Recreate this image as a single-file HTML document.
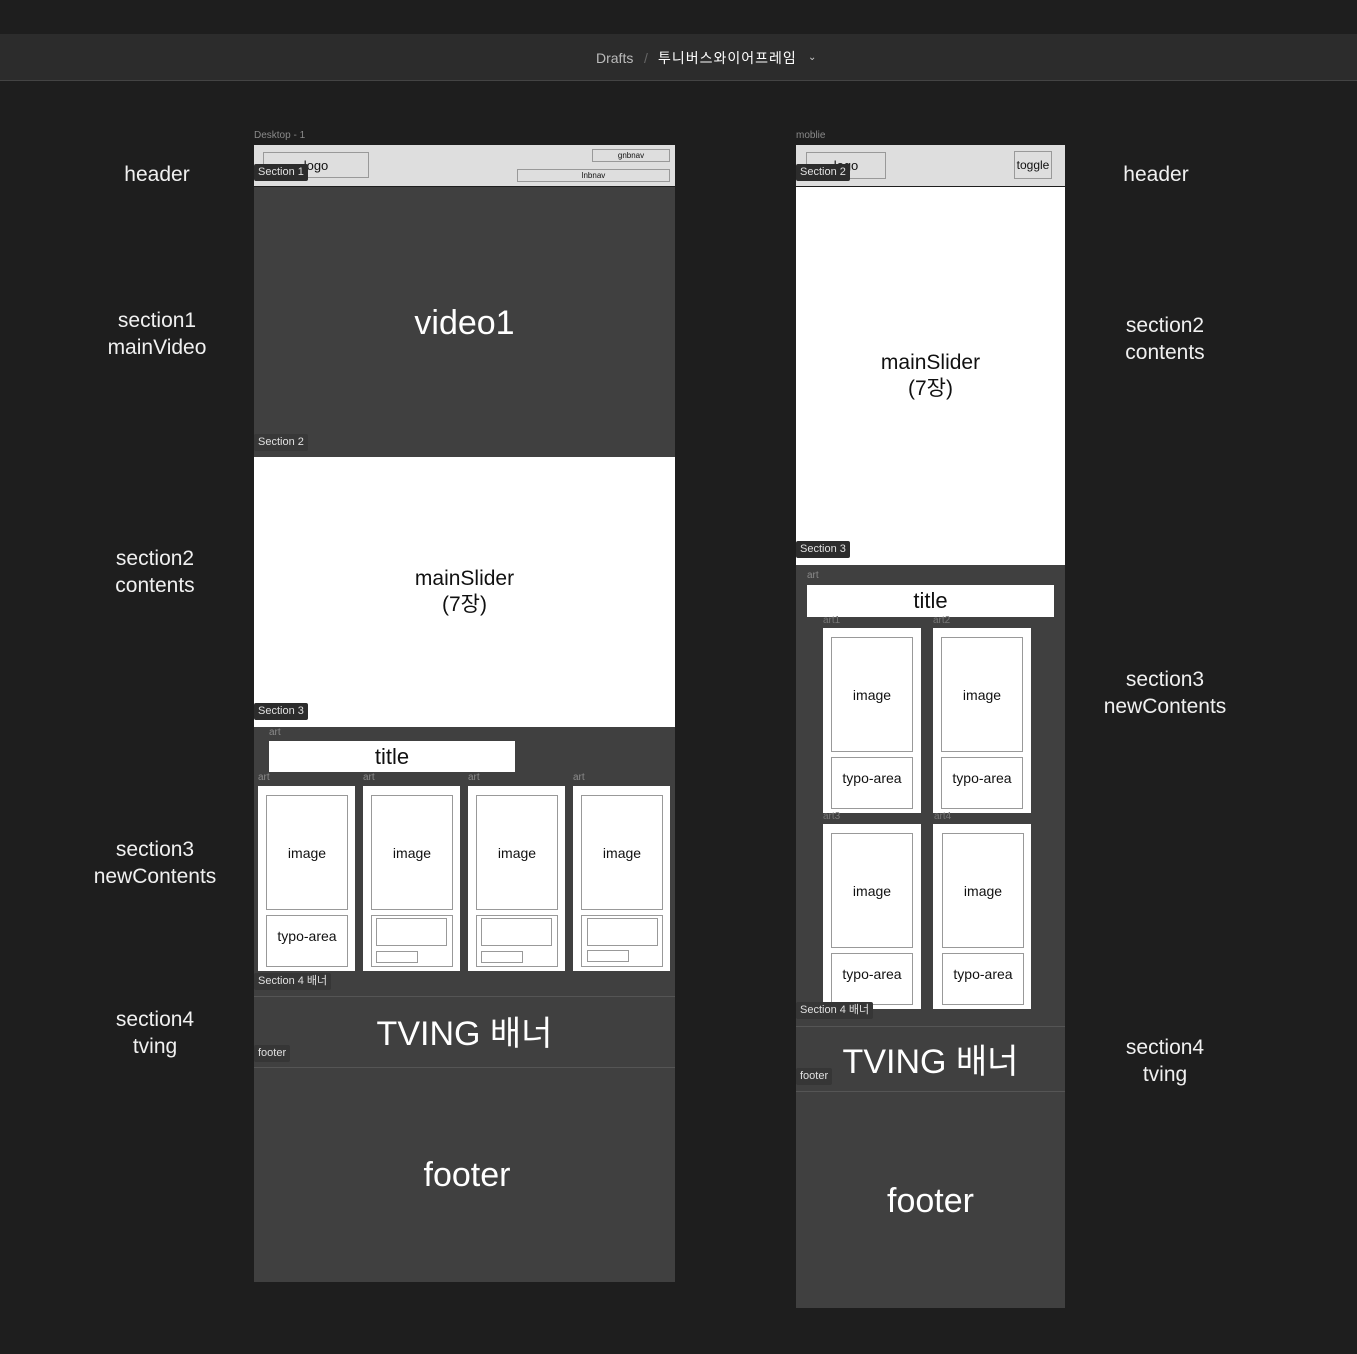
<!DOCTYPE html>
<html><head><meta charset="utf-8">
<style>
*{margin:0;padding:0;box-sizing:border-box}
body{width:1357px;height:1354px;background:#1e1e1e;position:relative;overflow:hidden;font-family:"Liberation Sans","Noto Sans CJK KR",sans-serif}
div{position:absolute}
.c{display:flex;align-items:center;justify-content:center;text-align:center}
.side{color:#f0f0f0;font-size:21px;line-height:27px;text-align:center;width:200px}
.tag{background:#2c2c2c;color:#e0e0e0;font-size:11px;line-height:17px;padding:0 4px;border-radius:2px;height:17px;white-space:nowrap}
.sm{color:#8a8a8a;font-size:10px;line-height:12px}
.dark{background:#404040}
.card{background:#fff}
.box{border:1px solid #999;background:#fff;color:#111;font-size:14px}
.ty{padding-bottom:10px}
.hl{height:1px;background:#555}
</style></head><body>
<div style="left:0;top:34px;width:1357px;height:47px;background:#2c2c2c;border-bottom:1px solid #444"></div>
<div style="left:596px;top:49px;font-size:14px;color:#bbb;line-height:18px">Drafts</div>
<div style="left:644px;top:49px;font-size:14px;color:#666;line-height:18px">/</div>
<div style="left:658px;top:49px;font-size:14px;color:#fff;line-height:18px;letter-spacing:1px">투니버스와이어프레임</div>
<div style="left:808px;top:49px;font-size:10px;color:#ccc;line-height:18px">⌄</div>

<div class="side" style="left:57px;top:161px">header</div>
<div class="side" style="left:57px;top:307px">section1<br>mainVideo</div>
<div class="side" style="left:55px;top:545px">section2<br>contents</div>
<div class="side" style="left:55px;top:836px">section3<br>newContents</div>
<div class="side" style="left:55px;top:1006px">section4<br>tving</div>
<div class="side" style="left:1056px;top:161px">header</div>
<div class="side" style="left:1065px;top:312px">section2<br>contents</div>
<div class="side" style="left:1065px;top:666px">section3<br>newContents</div>
<div class="side" style="left:1065px;top:1034px">section4<br>tving</div>

<div class="sm" style="left:254px;top:130px">Desktop - 1</div>
<div style="left:254px;top:145px;width:421px;height:41px;background:#dedede"></div>
<div class="box c" style="left:263px;top:152px;width:106px;height:26px;background:transparent;font-size:13px">logo</div>
<div class="box c" style="left:592px;top:149px;width:78px;height:13px;background:transparent;font-size:8px">gnbnav</div>
<div class="box c" style="left:517px;top:169px;width:153px;height:13px;background:transparent;font-size:8px">lnbnav</div>
<div class="tag" style="left:254px;top:164px">Section 1</div>
<div class="dark" style="left:254px;top:187px;width:421px;height:270px"></div>
<div class="c" style="left:254px;top:300px;width:421px;height:46px;color:#fff;font-size:34px">video1</div>
<div class="tag" style="left:254px;top:434px;background:#383838">Section 2</div>
<div class="c" style="left:254px;top:457px;width:421px;height:270px;background:#fff;color:#111;font-size:21px;line-height:26px">mainSlider<br>(7장)</div>
<div class="tag" style="left:254px;top:703px">Section 3</div>
<div class="dark" style="left:254px;top:727px;width:421px;height:270px"></div>
<div class="sm" style="left:269px;top:727px">art</div>
<div class="c" style="left:269px;top:741px;width:246px;height:31px;background:#fff;color:#111;font-size:22px">title</div>
<div class="sm" style="left:258px;top:772px">art</div>
<div class="sm" style="left:363px;top:772px">art</div>
<div class="sm" style="left:468px;top:772px">art</div>
<div class="sm" style="left:573px;top:772px">art</div>
<div class="card" style="left:258px;top:786px;width:97px;height:185px"></div>
<div class="card" style="left:363px;top:786px;width:97px;height:185px"></div>
<div class="card" style="left:468px;top:786px;width:97px;height:185px"></div>
<div class="card" style="left:573px;top:786px;width:97px;height:185px"></div>
<div class="box c" style="left:266px;top:795px;width:82px;height:115px">image</div>
<div class="box c" style="left:371px;top:795px;width:82px;height:115px">image</div>
<div class="box c" style="left:476px;top:795px;width:82px;height:115px">image</div>
<div class="box c" style="left:581px;top:795px;width:82px;height:115px">image</div>
<div class="box c ty" style="left:266px;top:915px;width:82px;height:52px">typo-area</div>
<div class="box" style="left:371px;top:915px;width:82px;height:52px"></div>
<div class="box" style="left:476px;top:915px;width:82px;height:52px"></div>
<div class="box" style="left:581px;top:915px;width:82px;height:52px"></div>
<div class="box" style="left:376px;top:918px;width:71px;height:28px"></div>
<div class="box" style="left:481px;top:918px;width:71px;height:28px"></div>
<div class="box" style="left:587px;top:918px;width:71px;height:28px"></div>
<div class="box" style="left:376px;top:951px;width:42px;height:12px"></div>
<div class="box" style="left:481px;top:951px;width:42px;height:12px"></div>
<div class="box" style="left:587px;top:950px;width:42px;height:12px"></div>
<div class="tag" style="left:254px;top:973px;background:#363636">Section 4 배너</div>
<div class="dark" style="left:254px;top:997px;width:421px;height:285px"></div>
<div class="hl" style="left:254px;top:996px;width:421px"></div>
<div class="hl" style="left:254px;top:1067px;width:421px"></div>
<div class="c" style="left:254px;top:1006px;width:421px;height:48px;color:#fff;font-size:34px">TVING 배너</div>
<div class="tag" style="left:254px;top:1045px;background:#363636">footer</div>
<div class="c" style="left:254px;top:1150px;width:426px;height:50px;color:#fff;font-size:34px">footer</div>

<div class="sm" style="left:796px;top:130px">moblie</div>
<div style="left:796px;top:145px;width:269px;height:41px;background:#dedede"></div>
<div class="box c" style="left:806px;top:152px;width:80px;height:27px;background:transparent;font-size:13px">logo</div>
<div class="box c" style="left:1014px;top:151px;width:38px;height:28px;background:transparent;font-size:12px">toggle</div>
<div class="tag" style="left:796px;top:164px">Section 2</div>
<div class="c" style="left:796px;top:187px;width:269px;height:378px;background:#fff;color:#111;font-size:21px;line-height:26px">mainSlider<br>(7장)</div>
<div class="tag" style="left:796px;top:541px">Section 3</div>
<div class="dark" style="left:796px;top:565px;width:269px;height:743px"></div>
<div class="sm" style="left:807px;top:570px">art</div>
<div class="c" style="left:807px;top:585px;width:247px;height:32px;background:#fff;color:#111;font-size:22px">title</div>
<div class="sm" style="left:823px;top:615px;color:#777">art1</div>
<div class="sm" style="left:933px;top:615px;color:#777">art2</div>
<div class="card" style="left:823px;top:628px;width:98px;height:185px"></div>
<div class="card" style="left:933px;top:628px;width:98px;height:185px"></div>
<div class="box c" style="left:831px;top:637px;width:82px;height:115px">image</div>
<div class="box c" style="left:941px;top:637px;width:82px;height:115px">image</div>
<div class="box c ty" style="left:831px;top:757px;width:82px;height:52px">typo-area</div>
<div class="box c ty" style="left:941px;top:757px;width:82px;height:52px">typo-area</div>
<div class="sm" style="left:823px;top:811px;color:#777">art3</div>
<div class="sm" style="left:934px;top:811px;color:#777">art4</div>
<div class="card" style="left:823px;top:824px;width:98px;height:185px"></div>
<div class="card" style="left:933px;top:824px;width:98px;height:185px"></div>
<div class="box c" style="left:831px;top:833px;width:82px;height:115px">image</div>
<div class="box c" style="left:942px;top:833px;width:82px;height:115px">image</div>
<div class="box c ty" style="left:831px;top:953px;width:82px;height:52px">typo-area</div>
<div class="box c ty" style="left:942px;top:953px;width:82px;height:52px">typo-area</div>
<div class="tag" style="left:796px;top:1002px;background:#363636">Section 4 배너</div>
<div class="hl" style="left:796px;top:1026px;width:269px"></div>
<div class="hl" style="left:796px;top:1091px;width:269px"></div>
<div class="c" style="left:796px;top:1034px;width:269px;height:48px;color:#fff;font-size:34px">TVING 배너</div>
<div class="tag" style="left:796px;top:1068px;background:#363636">footer</div>
<div class="c" style="left:796px;top:1176px;width:269px;height:50px;color:#fff;font-size:34px">footer</div>
</body></html>
